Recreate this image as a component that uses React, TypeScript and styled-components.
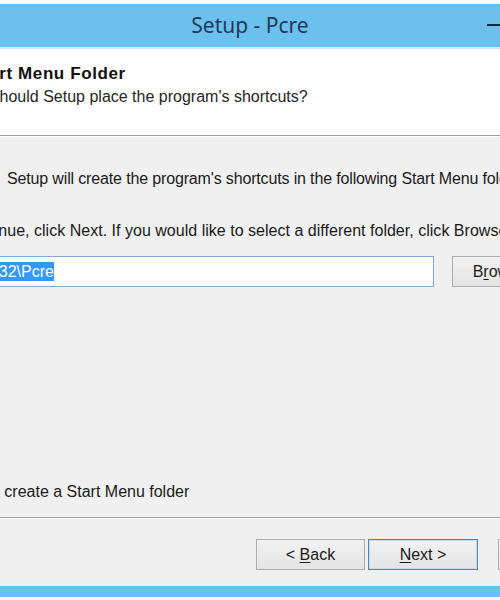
import React from 'react';
import styled, {createGlobalStyle} from 'styled-components';

const GlobalStyle = createGlobalStyle`
  html, body {
    margin: 0;
    padding: 0;
    background: #ffffff;
    overflow: hidden;
  }
`;

const Window = styled.div`
  width: 500px;
  height: 600px;
  overflow: hidden;
  display: flex;
  flex-direction: column;
  padding-top: 4px;
  box-sizing: border-box;
  background: #fbfbfb;
  font-family: "Liberation Sans", Arial, sans-serif;
  font-size: 16px;
  color: #1a1a1a;
`;

const TitleBar = styled.div`
  height: 43px;
  flex-shrink: 0;
  background: #6cc0ee;
  border-bottom: 2px solid #d6ebf7;
  display: grid;
  grid-template-columns: 1fr auto 1fr;
  align-items: center;
`;

const Title = styled.div`
  grid-column: 2;
  font-family: "Noto Sans", "Open Sans", sans-serif;
  font-size: 21px;
  color: #1f3b57;
  padding-bottom: 2px;
`;

const Controls = styled.div`
  grid-column: 3;
  height: 4px;
  display: flex;
  justify-content: flex-end;
  align-items: flex-start;
`;

const MinimizeGlyph = styled.span`
  display: block;
  flex: 0 0 13px;
  height: 2px;
  background: #16263a;
`;

const Header = styled.div`
  height: 87px;
  flex-shrink: 0;
  background: #ffffff;
  padding-top: 15px;
  box-sizing: border-box;
  border-bottom: 1px solid #a0a0a0;
`;

const PageName = styled.div<{cut: number}>`
  margin-left: ${p => p.cut}px;
  font-weight: bold;
  font-size: 17px;
  letter-spacing: 0.6px;
  line-height: 20px;
  white-space: nowrap;
  color: #111;
`;

const PageDescription = styled.div<{cut: number}>`
  margin-left: ${p => p.cut}px;
  margin-top: 4px;
  line-height: 18px;
  white-space: nowrap;
  color: #262626;
`;

const Rule = styled.div`
  height: 1px;
  flex-shrink: 0;
  background: #ffffff;
`;

const Body = styled.div`
  flex: 1;
  background: #f0f0f0;
  padding: 33px 0 16px;
  display: flex;
  flex-direction: column;
  border-bottom: 1px solid #a0a0a0;
`;

const Line = styled.div<{cut: number; gap?: number; tight?: boolean}>`
  margin-left: ${p => p.cut}px;
  margin-top: ${p => p.gap ?? 0}px;
  line-height: 18px;
  letter-spacing: ${p => (p.tight ? '-0.15px' : '0.02px')};
  white-space: nowrap;
`;

const PathRow = styled.div`
  display: flex;
  gap: 18px;
  margin: 16px 0 0 -63px;
  width: 623px;
`;

const PathField = styled.div`
  flex: 1;
  height: 31px;
  box-sizing: border-box;
  border: 1px solid #82a9d2;
  background: #ffffff;
  display: flex;
  align-items: center;
  padding-left: 3px;
  white-space: nowrap;
`;

const Selection = styled.span`
  background: #3399ff;
  color: #ffffff;
  line-height: 19px;
`;

const Spacer = styled.div`
  flex: 1;
`;

const CheckRow = styled.label`
  display: flex;
  align-items: center;
  gap: 6px;
  margin-left: -56px;
  line-height: 18px;
  white-space: nowrap;
`;

const CheckBox = styled.span`
  width: 13px;
  height: 13px;
  box-sizing: border-box;
  border: 1px solid #707070;
  background: #ffffff;
`;

const Footer = styled.div`
  height: 67px;
  flex-shrink: 0;
  background: #f0f0f0;
  padding: 20px 0 0 256px;
  box-sizing: border-box;
  display: flex;
  gap: 3px;
`;

const Button = styled.div<{primary?: boolean; wide?: boolean}>`
  width: ${p => (p.wide ? 110 : 109)}px;
  height: 31px;
  flex-shrink: 0;
  box-sizing: border-box;
  border: 1px solid ${p => (p.primary ? '#4f87b8' : '#acacac')};
  box-shadow: ${p => (p.primary ? 'inset 0 0 0 1px #c4dcf0' : 'none')};
  background: linear-gradient(#f2f2f2, #e4e4e4);
  display: flex;
  align-items: center;
  justify-content: center;
  color: #1a1a1a;
  white-space: nowrap;
  u {
    text-decoration-thickness: 1px;
    text-underline-offset: 2px;
  }
`;

const BrowseButton = styled(Button)`
  width: 108px;
`;

const FooterGap = styled.div`
  width: 14px;
  flex-shrink: 0;
`;

const BottomEdge = styled.div`
  height: 11px;
  flex-shrink: 0;
  background: #6cc0ee;
  margin-bottom: 3px;
`;

export default function App() {
  return (
    <>
      <GlobalStyle />
      <Window>
        <TitleBar>
          <Title>Setup - Pcre</Title>
          <Controls>
            <MinimizeGlyph />
          </Controls>
        </TitleBar>
        <Header>
          <PageName cut={-88}>Select Start Menu Folder</PageName>
          <PageDescription cut={-60}>Where should Setup place the program's shortcuts?</PageDescription>
        </Header>
        <Rule />
        <Body>
          <Line cut={7} tight>
            Setup will create the program's shortcuts in the following Start Menu folder.
          </Line>
          <Line cut={-57} gap={34}>
            To continue, click Next. If you would like to select a different folder, click Browse.
          </Line>
          <PathRow>
            <PathField>
              <Selection>GnuWin32\Pcre</Selection>
            </PathField>
            <BrowseButton>
              <span>
                B<u>r</u>owse...
              </span>
            </BrowseButton>
          </PathRow>
          <Spacer />
          <CheckRow>
            <CheckBox />
            <span>
              <u>D</u>on't create a Start Menu folder
            </span>
          </CheckRow>
        </Body>
        <Rule />
        <Footer>
          <Button>
            <span>
              &lt; <u>B</u>ack
            </span>
          </Button>
          <Button primary wide>
            <span>
              <u>N</u>ext &gt;
            </span>
          </Button>
          <FooterGap />
          <Button wide>Cancel</Button>
        </Footer>
        <BottomEdge />
      </Window>
    </>
  );
}
